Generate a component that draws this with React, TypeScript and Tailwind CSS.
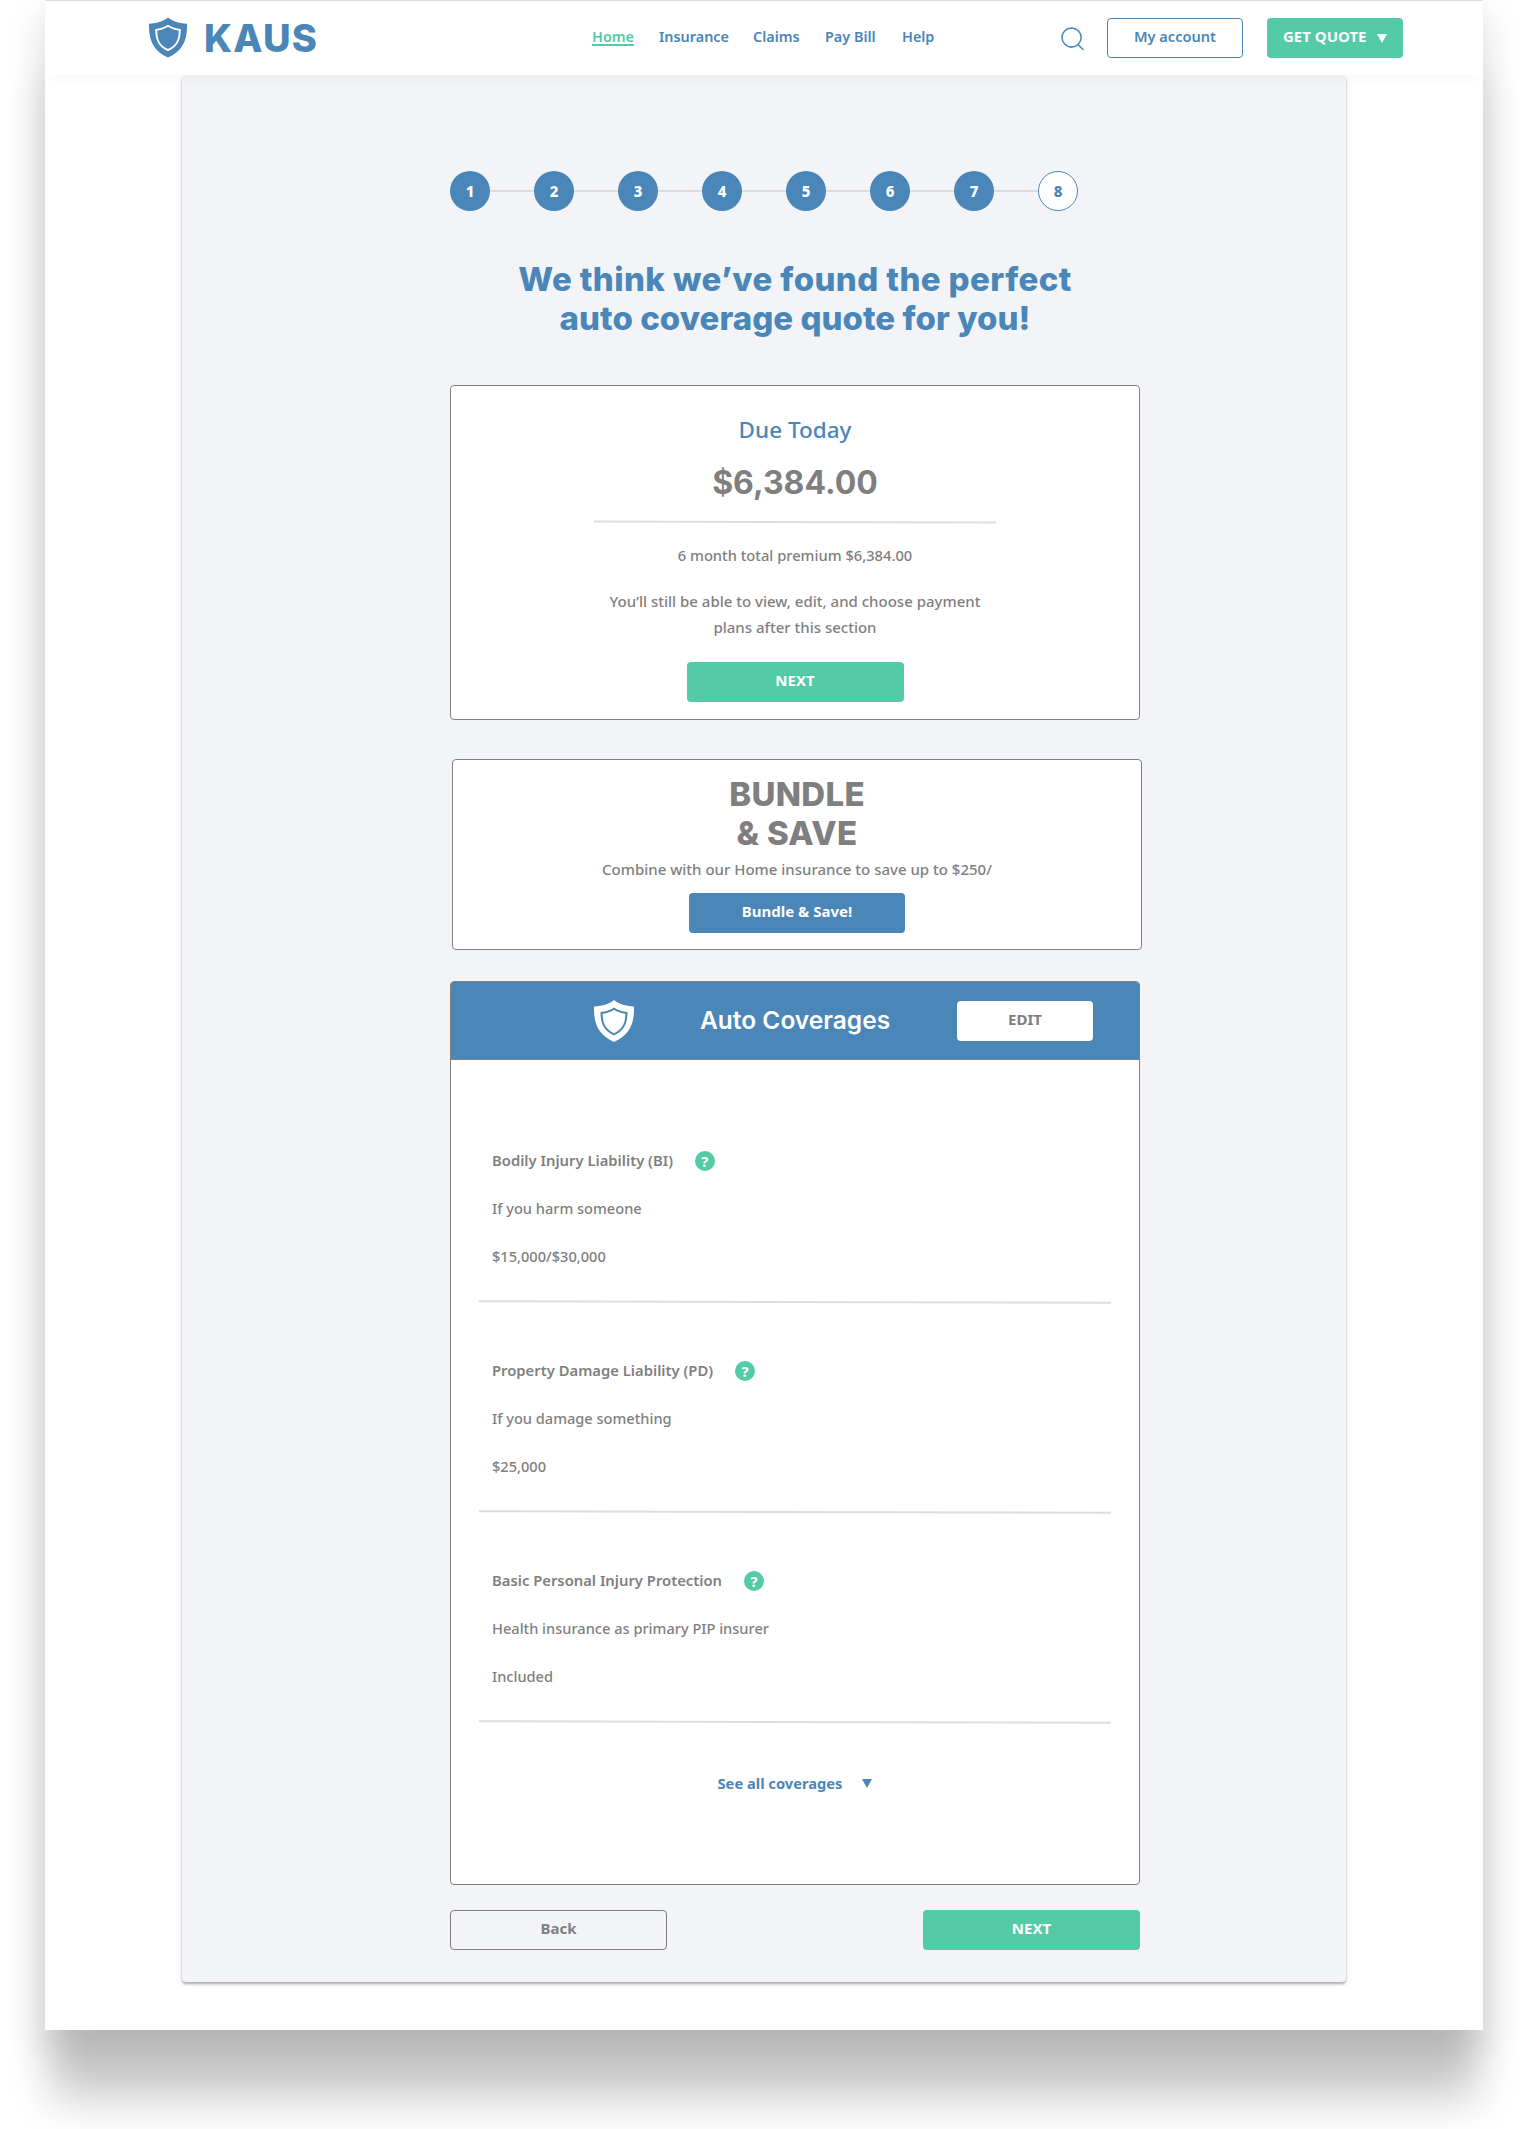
const body = "font-['Noto_Sans','Lato',sans-serif]";
const head = "font-['Inter','Noto_Sans',sans-serif]";

function Shield({ outer, inner, className }: { outer: string; inner: string; className: string }) {
  return (
    <svg viewBox="0 0 40 42" className={className}>
      <path d="M20 0C24 3.5 31 6 40 6.5C40.5 25 35 35 20 42C5 35 -.5 25 0 6.5C9 6 16 3.5 20 0Z" fill={outer} />
      <path d="M20 7.5C23.5 10 28 11.5 33.5 12C33.5 24 30 30.5 20 35.5C10 30.5 6.5 24 6.5 12C12 11.5 16.5 10 20 7.5Z" fill={inner} />
      <path d="M20 9.8C23 11.9 27 13.2 31.3 13.8C31.3 23.5 28.5 29 20 33.2C11.5 29 8.7 23.5 8.7 13.8C13 13.2 17 11.9 20 9.8Z" fill={outer} />
    </svg>
  );
}

function Tri({ className }: { className: string }) {
  return (
    <svg viewBox="0 0 10 9" className={className}>
      <path d="M0 0H10L5 9Z" fill="currentColor" />
    </svg>
  );
}

function Row({ title, desc, value }: { title: string; desc: string; value: string }) {
  return (
    <div>
      <div className="ml-[41px] flex items-center h-[26px] text-[14.8px] leading-[26px] font-semibold text-[#7f7f7f]">
        <span>{title}</span>
        <span className="ml-[22px] mt-[2px] w-5 h-5 rounded-full bg-[#52cba6] text-white text-[15px] leading-5 font-bold text-center">?</span>
      </div>
      <p className="ml-[41px] mt-[22px] text-[14.6px] leading-[26px] font-medium text-[#7f7f7f]">{desc}</p>
      <p className="ml-[41px] mt-[22px] text-[14.6px] leading-[26px] font-medium text-[#7f7f7f]">{value}</p>
      <div className="ml-[28px] mt-[32px] w-[632px] h-[2px] bg-[#dddddd] rotate-[0.15deg]" />
    </div>
  );
}

function Step({ n, done }: { n: number; done: boolean }) {
  return (
    <div
      className={
        done
          ? "w-10 h-10 rounded-full bg-[#4a86b8] text-white flex items-center justify-center text-[15px] font-extrabold"
          : "w-10 h-10 rounded-full bg-white border border-[#4a86b8] text-[#4a86b8] flex items-center justify-center text-[15px] font-extrabold"
      }
    >
      {n}
    </div>
  );
}

export default function App() {
  const steps = [1, 2, 3, 4, 5, 6, 7];
  return (
    <div className={`w-[1528px] h-[2129px] bg-white pl-[45px] overflow-hidden ${body}`}>
      <div className="w-[1438px] h-[2030px] bg-white border-t border-[#dddddd] shadow-[0_76px_40px_-6px_rgba(0,0,0,0.2),0_20px_36px_4px_rgba(0,0,0,0.12)]">
        <header className="relative z-10 h-[74px] bg-white flex items-start shadow-[0_6px_14px_rgba(0,0,0,0.025)]">
          <Shield outer="#4a86b8" inner="#ffffff" className="ml-[104px] mt-[16px] w-[38px] h-[41px]" />
          <span className={`ml-[17px] mt-[14px] text-[38px] leading-[46px] font-extrabold tracking-[1.2px] text-[#4a86b8] ${head}`}>KAUS</span>
          <nav className="absolute left-[547px] top-[23px] flex text-[14.4px] leading-[26px] font-semibold text-[#4a86b8] whitespace-nowrap">
            <span className="w-[42px] h-[22px] border-b-2 border-[#52cba6] text-[#52cba6] leading-[26px]">Home</span>
            <span className="ml-[25px] w-[70px]">Insurance</span>
            <span className="ml-[24px] w-[48px]">Claims</span>
            <span className="ml-[24px] w-[53px]">Pay Bill</span>
            <span className="ml-[24px] w-[34px]">Help</span>
          </nav>
          <svg viewBox="0 0 24 24" className="absolute left-[1016px] top-[26px] w-[23px] h-[23px]" fill="none" stroke="#4a86b8" strokeWidth="1.6">
            <circle cx="11" cy="11" r="10" />
            <path d="M18 18.5L23 23.5" strokeLinecap="round" />
          </svg>
          <div className="absolute left-[1062px] top-[17px] w-[136px] h-10 rounded-[4px] border border-[#4a86b8] flex items-center justify-center pb-[2px] text-[14.6px] font-semibold text-[#4a86b8]">My account</div>
          <div className="absolute left-[1222px] top-[17px] w-[136px] h-10 rounded-[4px] bg-[#52cba6] flex items-center pl-4 pb-[3px] text-[15px] font-bold text-white whitespace-nowrap">
            <span className="w-[84px]">GET QUOTE</span>
            <Tri className="ml-[10px] mt-[3px] w-[10px] h-[9px]" />
          </div>
        </header>

        <main className="ml-[137px] w-[1164px] h-[1907px] bg-[#f2f4f8] rounded-[4px] pl-[268px] pt-[96px] shadow-[0_2px_3px_rgba(0,0,0,0.35)]">
          <div className="flex items-center">
            {steps.map((n) => (
              <div key={n} className="flex items-center">
                <Step n={n} done />
                <div className="w-[44px] h-[2px] bg-[#dddddd]" />
              </div>
            ))}
            <Step n={8} done={false} />
          </div>

          <h1 className={`mt-[49px] w-[690px] text-center text-[33px] leading-[39px] font-extrabold tracking-[0.4px] text-[#4a86b8] ${head}`}>
            We think we’ve found the perfect
            <br />
            <span className="tracking-[0.05px]">auto coverage quote for you!</span>
          </h1>

          <section className="mt-[47px] w-[690px] h-[335px] bg-white border border-[#808080] rounded-[4px] pt-[29px] flex flex-col items-center">
            <div className="text-[22.5px] leading-[30px] font-medium text-[#4a86b8]">Due Today</div>
            <div className={`mt-[18px] text-[32px] leading-[40px] font-bold text-[#7f7f7f] ${head}`}>$6,384.00</div>
            <div className="mt-[18px] w-[402px] h-[2px] bg-[#dddddd] rotate-[0.15deg]" />
            <p className="mt-[19px] text-[14.7px] leading-[26px] font-medium text-[#7f7f7f]">6 month total premium $6,384.00</p>
            <p className="mt-[20px] text-[15px] leading-[26px] font-medium text-[#7f7f7f] text-center">
              You’ll still be able to view, edit, and choose payment
              <br />
              plans after this section
            </p>
            <div className="mt-[22px] w-[217px] h-10 rounded-[4px] bg-[#52cba6] flex items-center justify-center pb-[3px] text-[15px] font-bold text-white">NEXT</div>
          </section>

          <section className="mt-[39px] ml-[2px] w-[690px] h-[191px] bg-white border border-[#808080] rounded-[4px] pt-[15px] flex flex-col items-center">
            <div className={`text-[33px] leading-[39px] font-extrabold tracking-[0.3px] text-[#7f7f7f] text-center ${head}`}>
              BUNDLE
              <br />
              &amp; SAVE
            </div>
            <p className="mt-[3px] text-[15px] leading-[26px] font-medium text-[#7f7f7f]">Combine with our Home insurance to save up to $250/</p>
            <div className="mt-[11px] w-[216px] h-10 rounded-[4px] bg-[#4a86b8] flex items-center justify-center pb-[3px] text-[15px] font-bold text-white">Bundle &amp; Save!</div>
          </section>

          <section className="mt-[31px] w-[690px] h-[904px] bg-white border border-[#808080] rounded-[4px] overflow-hidden">
            <div className="h-[78px] bg-[#4a86b8] border-b border-[#808080] flex items-center">
              <Shield outer="#ffffff" inner="#4a86b8" className="ml-[143px] w-10 h-[42px]" />
              <div className={`ml-[66px] w-[190px] text-center text-[24.5px] font-semibold text-white whitespace-nowrap ${head}`}>Auto Coverages</div>
              <div className="ml-[67px] w-[136px] h-10 rounded-[4px] bg-white flex items-center justify-center pb-[2px] text-[15px] font-bold text-[#7f7f7f]">EDIT</div>
            </div>
            <div className="pt-[87px]">
              <Row title="Bodily Injury Liability (BI)" desc="If you harm someone" value="$15,000/$30,000" />
              <div className="mt-[54px]">
                <Row title="Property Damage Liability (PD)" desc="If you damage something" value="$25,000" />
              </div>
              <div className="mt-[54px]">
                <Row title="Basic Personal Injury Protection" desc="Health insurance as primary PIP insurer" value="Included" />
              </div>
              <div className="mt-[47px] flex items-center justify-center text-[14.7px] leading-[26px] font-bold text-[#4a86b8]">
                <span>See all coverages</span>
                <Tri className="ml-[20px] w-[10px] h-[9px]" />
              </div>
            </div>
          </section>

          <div className="mt-[25px] w-[690px] flex justify-between">
            <div className="w-[217px] h-10 rounded-[4px] border border-[#808080] flex items-center justify-center pb-[3px] text-[15px] font-bold text-[#808080]">Back</div>
            <div className="w-[217px] h-10 rounded-[4px] bg-[#52cba6] flex items-center justify-center pb-[3px] text-[15px] font-bold text-white">NEXT</div>
          </div>
        </main>
      </div>
    </div>
  );
}
